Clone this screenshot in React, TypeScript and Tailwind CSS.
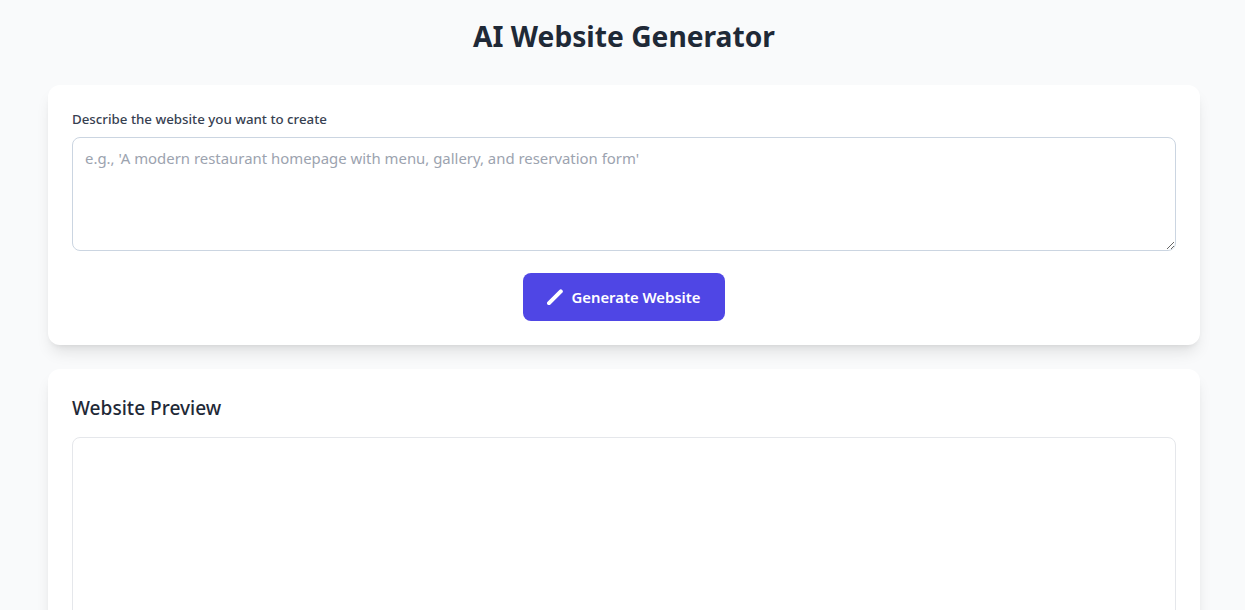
export default function App() {
  return (
    <div className="min-h-screen bg-[#f9fafb] pt-[17px] font-['Noto_Sans',sans-serif]">
      <div className="ml-12 w-[1152px]">
        <h1 className="mb-[31px] pt-px text-center text-[28.2px] leading-9 font-bold text-[#1f2937]">AI Website Generator</h1>

        <div className="mb-6 rounded-xl bg-white p-6 shadow-lg">
          <label className="mb-2 block text-[13.3px] leading-5 font-medium text-[#374151]">
            Describe the website you want to create
          </label>
          <textarea
            rows={4}
            placeholder="e.g., 'A modern restaurant homepage with menu, gallery, and reservation form'"
            className="w-full rounded-lg border border-[#cbd5e1] px-3 py-2 text-[14.92px] leading-6 placeholder:text-[#9ca3af]"
          />
          <div className="mt-4 flex justify-center">
            <button className="flex items-center gap-2 rounded-lg bg-[#4f46e5] px-6 py-3 text-[14.85px] leading-6 font-semibold text-white">
              <svg viewBox="0 0 16 16" className="h-4 w-4">
                <path d="M2 14.2 13.8 2.4" stroke="white" strokeWidth="4" strokeLinecap="round" fill="none" />
              </svg>
              Generate Website
            </button>
          </div>
        </div>

        <div className="rounded-xl bg-white p-6 shadow-lg">
          <h2 className="mb-[15px] pt-px text-[19.1px] leading-7 font-medium text-[#1f2937]">Website Preview</h2>
          <div className="h-[600px] rounded-lg border border-[#e5e7eb]" />
        </div>
      </div>
    </div>
  )
}
